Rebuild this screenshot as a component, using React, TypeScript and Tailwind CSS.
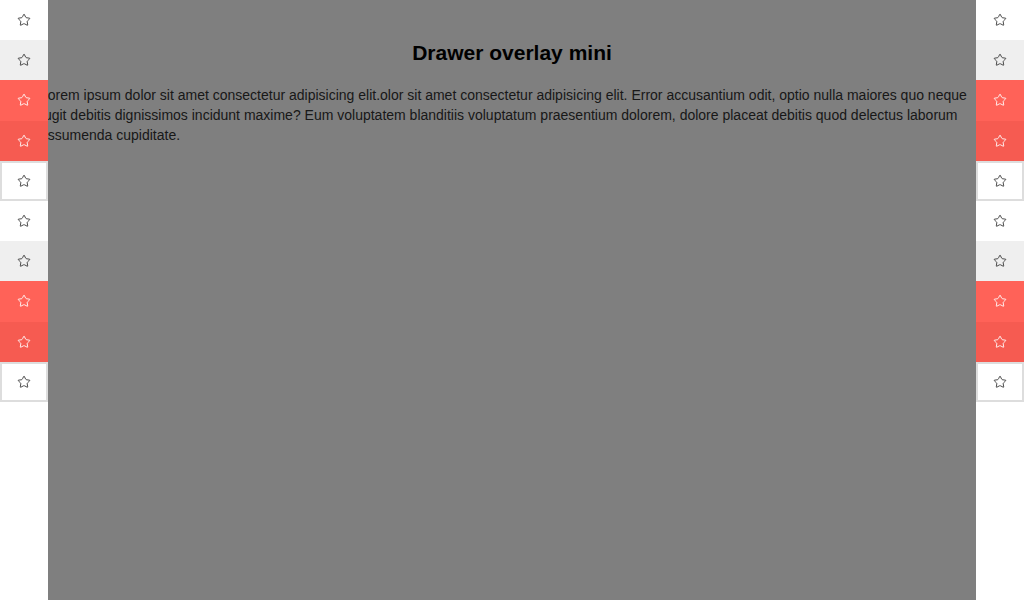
import { Star } from 'lucide-react'

const ROWS = [
  'bg-white',
  'bg-[#efefef]',
  'bg-[#ff6258] text-white',
  'bg-[#f65b51] text-white',
  'bg-white border-2 border-[#dddddd]',
]

function MiniDrawer({ side }: { side: 'left' | 'right' }) {
  return (
    <aside className={`fixed top-0 z-20 h-full w-12 bg-white ${side === 'left' ? 'left-0' : 'right-0'}`}>
      {[...ROWS, ...ROWS].map((cls, i) => (
        <div key={i} className={`flex h-[40.2px] items-center justify-center text-[#333] ${cls}`}>
          <Star size={14} strokeWidth={1.5} />
        </div>
      ))}
    </aside>
  )
}

export default function App() {
  return (
    <div className="relative h-[600px] overflow-hidden bg-white font-['Liberation_Sans',Arial,sans-serif] text-black">
      <main className="px-[40px] pt-[40px]">
        <h1 className="text-center text-[21px] font-bold leading-[25px]">Drawer overlay mini</h1>
        <p className="mt-[20px] text-[14px] leading-[20px] text-[#333]">
          Lorem ipsum dolor sit amet consectetur adipisicing elit.olor sit amet consectetur adipisicing elit. Error
          accusantium odit, optio nulla maiores quo neque fugit debitis dignissimos incidunt maxime? Eum voluptatem
          blanditiis voluptatum praesentium dolorem, dolore placeat debitis quod delectus laborum assumenda cupiditate.
        </p>
      </main>
      <div className="fixed inset-0 z-10 bg-black/50" />
      <MiniDrawer side="left" />
      <MiniDrawer side="right" />
    </div>
  )
}
